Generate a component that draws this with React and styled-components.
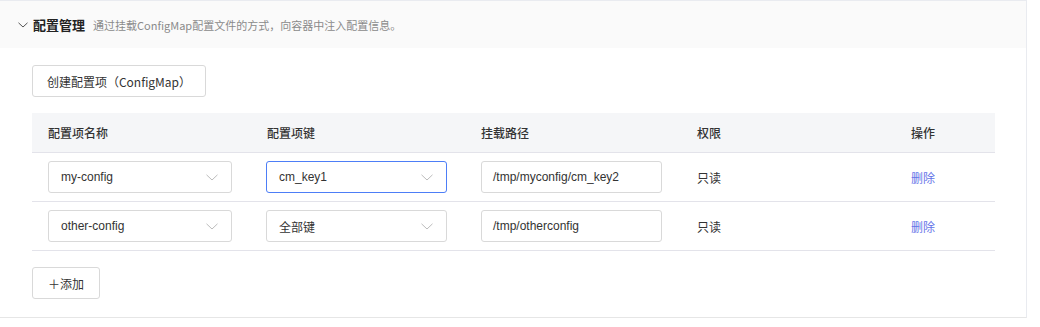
import React from "react";
import styled, { createGlobalStyle } from "styled-components";

const GlobalStyle = createGlobalStyle`
  body {
    margin: 0;
    background: #ffffff;
    font-family: "Liberation Sans", "Noto Sans CJK SC", sans-serif;
    color: #333333;
  }
`;

const rows = [
  { name: "my-config", key: "cm_key1", path: "/tmp/myconfig/cm_key2", focused: true },
  { name: "other-config", key: "全部键", path: "/tmp/otherconfig", focused: false },
];

const Chevron = ({ w = 12, h = 7, color = "#bcbcbc" }) => (
  <svg width={w} height={h} viewBox={`0 0 ${w} ${h}`} fill="none">
    <path d={`M0.5 0.8 L${w / 2} ${h - 1} L${w - 0.5} 0.8`} stroke={color} strokeWidth="1" />
  </svg>
);

const App = () => {
  return (
    <>
      <GlobalStyle />
      <Panel>
        <Header>
          <Chevron w={10} h={6} color="#555" />
          <Title>配置管理</Title>
          <Desc>通过挂载ConfigMap配置文件的方式，向容器中注入配置信息。</Desc>
        </Header>
        <Body>
          <Button $width={174}>创建配置项（ConfigMap）</Button>
          <Table>
            <HeadRow>
              <HeadCell>配置项名称</HeadCell>
              <HeadCell>配置项键</HeadCell>
              <HeadCell>挂载路径</HeadCell>
              <HeadCell>权限</HeadCell>
              <HeadCell>操作</HeadCell>
            </HeadRow>
            {rows.map((r) => (
              <Row key={r.name}>
                <Cell>
                  <Select $width={184}>
                    <span>{r.name}</span>
                    <Chevron />
                  </Select>
                </Cell>
                <Cell $pad={15}>
                  <Select $width={181} $focused={r.focused}>
                    <span>{r.key}</span>
                    <Chevron />
                  </Select>
                </Cell>
                <Cell>
                  <Input>{r.path}</Input>
                </Cell>
                <Cell>只读</Cell>
                <Cell>
                  <Link>删除</Link>
                </Cell>
              </Row>
            ))}
          </Table>
          <Button $width={68}>＋添加</Button>
        </Body>
      </Panel>
    </>
  );
};

const Panel = styled.div`
  width: 1027px;
  border-top: 1px solid #e9ebf0;
  border-right: 1px solid #e9ebf0;
  border-bottom: 1px solid #e6e6e6;
  box-sizing: border-box;
`;

const Header = styled.div`
  height: 47px;
  background: #fafafa;
  display: flex;
  align-items: center;
  padding-left: 18px;
  gap: 5px;
`;

const Title = styled.span`
  font-family: "Noto Sans CJK SC", sans-serif;
  font-size: 13px;
  font-weight: 700;
  color: #222;
  margin-right: 3px;
`;

const Desc = styled.span`
  font-family: "Noto Sans CJK SC", sans-serif;
  font-size: 11px;
  color: #8a8a8a;
`;

const Body = styled.div`
  padding: 17px 32px 18px;
  display: flex;
  flex-direction: column;
  align-items: flex-start;
  gap: 16px;
`;

const Button = styled.div`
  width: ${(p) => p.$width}px;
  height: 32px;
  box-sizing: border-box;
  border: 1px solid #d9d9d9;
  border-radius: 3px;
  display: flex;
  align-items: center;
  justify-content: center;
  font-family: "Noto Sans CJK SC", sans-serif;
  font-size: 12px;
  color: #333;
  background: #fff;
`;

const Table = styled.div`
  width: 963px;
  display: flex;
  flex-direction: column;
`;

const cols = "219px 214px 216px 214px 1fr";

const HeadRow = styled.div`
  display: grid;
  grid-template-columns: ${cols};
  height: 39px;
  align-items: center;
  background: #f5f6f8;
  border-bottom: 1px solid #e3e3ea;
`;

const HeadCell = styled.div`
  padding-left: 16px;
  font-family: "Noto Sans CJK SC", sans-serif;
  font-size: 12px;
  font-weight: 500;
  color: #333;
`;

const Row = styled.div`
  display: grid;
  grid-template-columns: ${cols};
  height: 48px;
  align-items: center;
  border-bottom: 1px solid #e3e3ea;
`;

const Cell = styled.div`
  padding-left: ${(p) => p.$pad ?? 16}px;
  font-family: "Noto Sans CJK SC", sans-serif;
  font-size: 12px;
  color: #333;
`;

const Select = styled.div`
  width: ${(p) => p.$width}px;
  height: 32px;
  box-sizing: border-box;
  border: 1px solid ${(p) => (p.$focused ? "#4d7ef7" : "#d9d9d9")};
  border-radius: 3px;
  display: flex;
  align-items: center;
  justify-content: space-between;
  padding: 0 13px 0 12px;
  font-family: "Liberation Sans", "Noto Sans CJK SC", sans-serif;
  font-size: 12px;
  color: #333;
`;

const Input = styled.div`
  width: 181px;
  height: 32px;
  box-sizing: border-box;
  border: 1px solid #d9d9d9;
  border-radius: 3px;
  display: flex;
  align-items: center;
  padding: 0 11px;
  font-family: "Liberation Sans", "Noto Sans CJK SC", sans-serif;
  font-size: 12px;
  color: #333;
`;

const Link = styled.span`
  color: #6473e8;
  cursor: pointer;
`;

export default App;
